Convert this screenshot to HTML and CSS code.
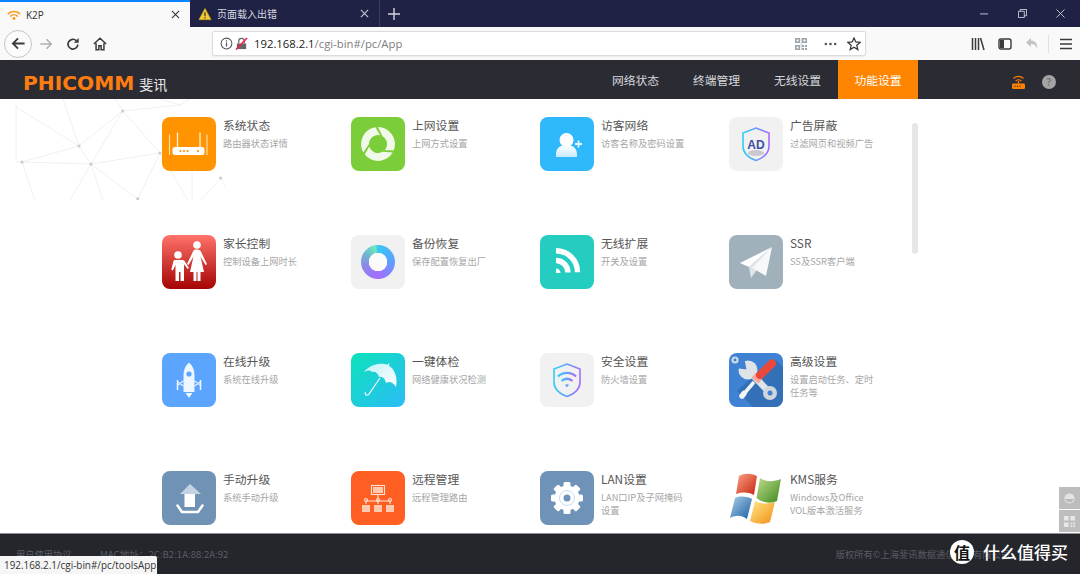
FILE: index.html
```html
<!DOCTYPE html>
<html lang="zh">
<head>
<meta charset="utf-8">
<title>K2P</title>
<link rel="stylesheet" href="styles.css">
</head>
<body>
<div class="tabbar">
  <div class="tab tab-active">
    <svg class="tab-ico" viewBox="0 0 16 16"><g fill="none" stroke="#ff9a1f" stroke-width="1.8" stroke-linecap="round"><path d="M1.5 6.5a9.5 9.5 0 0 1 13 0"/><path d="M4.2 9.2a5.6 5.6 0 0 1 7.6 0"/></g><circle cx="8" cy="12" r="1.7" fill="#ff9a1f"/></svg>
    <span class="tab-label">K2P</span>
    <svg class="tab-x" viewBox="0 0 10 10"><path d="M1 1l8 8M9 1l-8 8" stroke="#333" stroke-width="1.2"/></svg>
  </div>
  <div class="tab tab-idle">
    <svg class="tab-ico" viewBox="0 0 16 16"><path d="M8 1.5L15 14.5H1z" fill="#f5c932" stroke="#c9a21f" stroke-width=".6"/><path d="M8 6v4.5M8 11.8v1.3" stroke="#333" stroke-width="1.4"/></svg>
    <span class="tab-label">页面载入出错</span>
    <svg class="tab-x" viewBox="0 0 10 10"><path d="M1 1l8 8M9 1l-8 8" stroke="#c8c9d4" stroke-width="1.2"/></svg>
  </div>
  <svg class="tab-plus" viewBox="0 0 12 12"><path d="M6 0v12M0 6h12" stroke="#d5d6e0" stroke-width="1.4"/></svg>
  <div class="winctl">
    <svg viewBox="0 0 10 10"><path d="M0 5.5h9" stroke="#d0d1db" stroke-width="1"/></svg>
    <svg viewBox="0 0 10 10"><path d="M.5 2.5h6.5v7H.5zM2.5 2.5V.5h7v7H7" fill="none" stroke="#d0d1db" stroke-width="1"/></svg>
    <svg viewBox="0 0 10 10"><path d="M.5.5l9 9M9.500.5l-9 9" stroke="#d0d1db" stroke-width="1"/></svg>
  </div>
</div>

<div class="toolbar">
  <div class="back"><svg viewBox="0 0 16 16"><path d="M14.500 8H2M7.500 2.500L2 8l5.500 5.500" fill="none" stroke="#3a3a3c" stroke-width="1.9"/></svg></div>
  <svg class="tb tb-fwd" viewBox="0 0 16 16"><path d="M1.500 8H14M8.500 2.500L14 8l-5.500 5.500" fill="none" stroke="#b1b1b3" stroke-width="1.800"/></svg>
  <svg class="tb tb-reload" viewBox="0 0 16 16"><path d="M13.500 8.500a5.600 5.600 0 1 1-1.700-4.300" fill="none" stroke="#3a3a3c" stroke-width="1.900"/><path d="M14.500 1v5.500H9z" fill="#3a3a3c"/></svg>
  <svg class="tb tb-home" viewBox="0 0 16 16"><path d="M1 8l7-6.500L15 8M3.500 7v7.500h3.200v-4.500h2.600v4.500h3.200V7" fill="none" stroke="#3a3a3c" stroke-width="1.700"/></svg>
  <div class="urlbar">
    <svg class="u-info" viewBox="0 0 14 14"><circle cx="7" cy="7" r="5.800" fill="none" stroke="#555" stroke-width="1.100"/><path d="M7 6v4.200M7 3.600v1.300" stroke="#555" stroke-width="1.300"/></svg>
    <svg class="u-lock" viewBox="0 0 14 14"><path d="M2 13V7h10v6z" fill="#666"/><path d="M4 7V4.500a3 3 0 0 1 6 0V7" fill="none" stroke="#666" stroke-width="1.300"/><path d="M1 13.500L13 1" stroke="#f0224b" stroke-width="1.700"/></svg>
    <span class="url"><b>192.168.2.1</b>/cgi-bin#/pc/App</span>
    <svg class="u-qr" viewBox="0 0 12 12"><path d="M0 0h5v5H0zM7 0h5v5H7zM0 7h5v5H0z" fill="#9ba3ad"/><path d="M1.500 1.500h2v2h-2zM8.500 1.500h2v2h-2zM1.500 8.500h2v2h-2z" fill="#fff"/><path d="M7 7h2v2H7zM10 7h2v2h-2zM7 10h2v2H7zM10 10h2v2h-2zM5.800 0h.6v12h-.6z" fill="#9ba3ad"/></svg>
    <svg class="u-dots" viewBox="0 0 14 4"><circle cx="2" cy="2" r="1.400" fill="#555"/><circle cx="7" cy="2" r="1.400" fill="#555"/><circle cx="12" cy="2" r="1.400" fill="#555"/></svg>
    <svg class="u-star" viewBox="0 0 14 14"><path d="M7 1l1.800 4 4.300.4-3.300 2.900 1 4.300L7 10.300 3.200 12.600l1-4.300L.9 5.400 5.200 5z" fill="none" stroke="#3a3a3c" stroke-width="1.300"/></svg>
  </div>
  <div class="tb-right">
    <svg class="r-lib" viewBox="0 0 14 14"><path d="M1.500 1v12M4.500 1v12M7.500 1v12M9.500 1l3.500 12" stroke="#3a3a3c" stroke-width="1.500" fill="none"/></svg>
    <svg class="r-side" viewBox="0 0 14 14"><rect x="1" y="2" width="12" height="10" rx="2" fill="none" stroke="#3a3a3c" stroke-width="1.400"/><rect x="2" y="3" width="4" height="8" fill="#3a3a3c"/></svg>
    <svg class="r-undo" viewBox="0 0 14 14"><path d="M6 1L1 5.500 6 10V7c3 0 5 1 6 5 .8-5-1.500-8-6-8.500z" fill="#c2c2c5"/></svg>
    <i class="r-sep"></i>
    <svg class="r-menu" viewBox="0 0 14 14"><path d="M1 2.500h12M1 7h12M1 11.500h12" stroke="#3a3a3c" stroke-width="1.600"/></svg>
  </div>
</div>

<header class="topnav">
  <div class="logo"><span class="logo-en">PHICOMM</span><span class="logo-cn">斐讯</span></div>
  <nav class="menu">
    <a class="menu-item">网络状态</a>
    <a class="menu-item">终端管理</a>
    <a class="menu-item">无线设置</a>
    <a class="menu-item menu-on">功能设置</a>
  </nav>
  <svg class="nav-router" viewBox="0 0 15 16"><path d="M2.500 4.500a7 7 0 0 1 10 0M4.700 7a4 4 0 0 1 5.600 0" fill="none" stroke="#ff7f00" stroke-width="1.200"/><path d="M7.500 7v3" stroke="#ff7f00" stroke-width="1.200"/><rect x="1" y="9.500" width="13" height="5.500" rx="1.300" fill="#ff7f00"/><path d="M3.500 12.300h1M6 12.300h1M8.500 12.300h1" stroke="#2b2c33" stroke-width="1.200"/></svg>
  <div class="nav-help">?</div>
</header>

<main class="content">
  <svg class="mesh" viewBox="0 99 240 101">
    <g stroke="#ececec" stroke-width=".8" fill="none">
      <path d="M16 107L79 146M63 99L79 146M79 146L22 162M79 146L122.700 111M79 146L91 164M22 162L91 164M22 162L35 200M16 162h6M16 104V160M91 164L160 153M91 164L122.700 111M91 164L70 200M91 164L103 200M91 164L137.700 199M160 153L137.700 199M122.700 111L160 153M122.700 111L180 105M122.700 111L115 99M180 105L160 99M160 153L188 200M192 130L192 200M220.700 178L201 200M220.700 178L225 186M180 105L190 99"/>
    </g>
    <g fill="#c9c9c9"><circle cx="122.700" cy="111" r="1.500"/><circle cx="79" cy="146" r="1.500"/><circle cx="22" cy="162" r="1.500"/><circle cx="91" cy="164" r="1.500"/><circle cx="160" cy="153" r="1.500"/><circle cx="137.700" cy="198.700" r="1.500"/><circle cx="220.700" cy="178" r="1.500"/></g>
  </svg>

  <div class="apps">
    <div class="app">
      <div class="ico c-orange"><svg viewBox="0 0 54 54"><g stroke="#ffe2b8" stroke-width="1.100"><path d="M7.500 17.500V38M45 17.500V38"/></g><g stroke="#fff1dc" stroke-width="1.300"><path d="M15.500 15.500V31M38 15.500V31"/></g><rect x="10.500" y="30" width="32" height="8" rx="2.500" fill="#fff"/><g fill="#ff9400"><circle cx="18.500" cy="34" r="1.100"/><circle cx="22" cy="34" r="1.100"/><circle cx="25.500" cy="34" r="1.100"/><circle cx="36" cy="34" r="1.100"/></g></svg></div>
      <div class="txt"><div class="t">系统状态</div><div class="s">路由器状态详情</div></div>
    </div>
    <div class="app">
      <div class="ico c-green"><svg viewBox="0 0 54 54"><g fill="#f1fae9"><path d="M12.300 35.500A17 17 0 0 1 24.500 10.200L29.100 18.200A9 9 0 0 0 18 27z"/><path d="M12.300 35.500A17 17 0 0 1 24.500 10.200L29.100 18.200A9 9 0 0 0 18 27z" transform="rotate(120 27 27)"/><path d="M12.300 35.500A17 17 0 0 1 24.500 10.200L29.100 18.200A9 9 0 0 0 18 27z" transform="rotate(240 27 27)"/></g></svg></div>
      <div class="txt"><div class="t">上网设置</div><div class="s">上网方式设置</div></div>
    </div>
    <div class="app">
      <div class="ico c-sky"><svg viewBox="0 0 54 54"><defs><linearGradient id="gp" x1="0" y1="0" x2="0" y2="1"><stop offset="0" stop-color="#fff"/><stop offset="1" stop-color="#c8e9fc"/></linearGradient></defs><circle cx="26.500" cy="23" r="7" fill="#fff"/><path d="M16 40v-3c0-5 3.500-8 7-8.500 2 1.500 5 1.500 7 0 3.500.5 7 3.500 7 8.500v3z" fill="url(#gp)"/><path d="M38.500 23.500v7M35 27h7" stroke="#e8f7ff" stroke-width="1.800"/></svg></div>
      <div class="txt"><div class="t">访客网络</div><div class="s">访客名称及密码设置</div></div>
    </div>
    <div class="app">
      <div class="ico c-pale"><svg viewBox="0 0 54 54"><defs><linearGradient id="gs" x1="0" y1="0" x2="1" y2="0"><stop offset="0" stop-color="#2bd0f5"/><stop offset="1" stop-color="#a76cff"/></linearGradient></defs><path d="M27 11l13 5v13c0 7-6 12-13 14.500C20 41 14 36 14 29V16z" fill="none" stroke="url(#gs)" stroke-width="1.600"/><ellipse cx="27" cy="36" rx="8" ry="3" fill="#c9c9cf"/><text class="ad" x="27" y="31.500" text-anchor="middle">AD</text></svg></div>
      <div class="txt"><div class="t">广告屏蔽</div><div class="s">过滤网页和视频广告</div></div>
    </div>

    <div class="app">
      <div class="ico c-red"><svg viewBox="0 0 54 54"><g fill="#fff"><circle cx="35" cy="10" r="3.800"/><path d="M35 14.500c2.200 0 3.300.8 4 2.300l6 12.500-1.500.8-5-8.500 3.500 15.500h-3.500V46h-3v-9h-1v9h-3v-9.100h-3.500l3.500-15.500-5 8.500-1.500-.8 6-12.500c.7-1.500 1.800-2.300 4-2.300z"/><circle cx="16" cy="20" r="3.800"/><path d="M11.500 25h9c1.500 0 2.200.8 2.700 2L27 33l-1.400 1-3.600-4.800V46h-3.500v-9h-1.500v9H13.500V30l-2.700 5.500-1.500-.8 2-8c.2-1 .5-1.700 1.700-1.700z"/></g></svg></div>
      <div class="txt"><div class="t">家长控制</div><div class="s">控制设备上网时长</div></div>
    </div>
    <div class="app">
      <div class="ico c-pale ringbox"><div class="ring"></div></div>
      <div class="txt"><div class="t">备份恢复</div><div class="s">保存配置恢复出厂</div></div>
    </div>
    <div class="app">
      <div class="ico c-teal"><svg viewBox="0 0 54 54"><g fill="none" stroke="#fff" stroke-width="5.400"><path d="M16 15.700a21.500 21.500 0 0 1 21.500 21.500"/><path d="M16 25.500a11.900 11.900 0 0 1 11.900 11.900"/></g><path d="M16 33.500a4.500 4.500 0 0 1 4.500 4.500H16z" fill="#fff"/></svg></div>
      <div class="txt"><div class="t">无线扩展</div><div class="s">开关及设置</div></div>
    </div>
    <div class="app">
      <div class="ico c-slate"><svg viewBox="0 0 54 54"><path d="M43 12L11 28l9 4z" fill="#fff"/><path d="M43 12L20 32l2 11 5-7z" fill="#dfe5e8"/><path d="M43 12L23 33l14 8z" fill="#f6f8f9"/></svg></div>
      <div class="txt"><div class="t">SSR</div><div class="s">SS及SSR客户端</div></div>
    </div>

    <div class="app">
      <div class="ico c-blue"><svg viewBox="0 0 54 54"><path d="M27 9.500c3.500 3 5.500 7 5.500 12.500v17h-11V22c0-5.500 2-9.500 5.500-12.500z" fill="#eef6ff"/><path d="M23.500 40h7L27 45z" fill="#eef6ff"/><g fill="none" stroke="#eef6ff" stroke-width="1.100"><path d="M21.500 28l-6 4M21.500 33l-6-4M32.500 28l6 4M32.500 33l6-4"/><path d="M15.500 27v10M38.500 27v10" stroke-width="1.500"/></g><circle cx="27" cy="21" r="2.600" fill="#5ba5ff"/></svg></div>
      <div class="txt"><div class="t">在线升级</div><div class="s">系统在线升级</div></div>
    </div>
    <div class="app">
      <div class="ico c-aqua"><svg viewBox="0 0 54 54"><defs><linearGradient id="gu" x1="0" y1="0" x2="1" y2="1"><stop offset="0" stop-color="#bff2fb"/><stop offset="1" stop-color="#fff"/></linearGradient></defs><path d="M13 19C19 11 30 9 37 12c7 4 10 13 8 22-3-5-7-6-10-4-1-5-4-7-7-6-1-4-4-6-7-5-2-2-5-2-8 0z" fill="url(#gu)"/><path d="M38 10.500l-1.500 2.500M29 25L18 41c-1 1.500-3 1.500-3.500.2-.4-.8-.3-1.500 0-2.200" fill="none" stroke="#e9fbff" stroke-width="1.300"/></svg></div>
      <div class="txt"><div class="t">一键体检</div><div class="s">网络健康状况检测</div></div>
    </div>
    <div class="app">
      <div class="ico c-pale"><svg viewBox="0 0 54 54"><defs><linearGradient id="gw" x1="0" y1="0" x2="1" y2="0"><stop offset="0" stop-color="#2bd0f5"/><stop offset="1" stop-color="#a76cff"/></linearGradient></defs><path d="M27 11l13 5v13c0 7-6 12-13 14.500C20 41 14 36 14 29V16z" fill="none" stroke="url(#gw)" stroke-width="1.600"/><g fill="none" stroke="url(#gw)" stroke-width="2.400"><path d="M18 23.500a13 13 0 0 1 18 0"/><path d="M21.500 28a8 8 0 0 1 11 0"/></g><path d="M25 32a3 3 0 0 1 4 0l-2 2.500z" fill="#6ba8fb"/></svg></div>
      <div class="txt"><div class="t">安全设置</div><div class="s">防火墙设置</div></div>
    </div>
    <div class="app">
      <div class="ico c-tools"><svg viewBox="0 0 54 54"><path d="M47 7L54 14V54H24L8 38 30 18z" fill="#3470b8"/><circle cx="6" cy="7" r="3.600" fill="#cdd9e4"/><circle cx="6" cy="7" r="1.400" fill="#3f82d4"/><path d="M20 18L41 40" stroke="#dfe4e8" stroke-width="6.500"/><circle cx="19" cy="17" r="9.500" fill="#dfe4e8"/><path d="M6 15L17.500 16.500 15 4z" fill="#3f82d4"/><circle cx="41" cy="40" r="7" fill="#cfd6dc"/><circle cx="41" cy="40" r="2.500" fill="#3f82d4"/><path d="M25 29L14 42" stroke="#f2f4f6" stroke-width="3.500"/><path d="M15 40.500L13 43" stroke="#f2f4f6" stroke-width="5.500" stroke-linecap="round"/><path d="M30 23L26 27.500" stroke="#f7a59b" stroke-width="9"/><path d="M43 10.500L31 22" stroke="#e9483a" stroke-width="8" stroke-linecap="round"/></svg></div>
      <div class="txt"><div class="t">高级设置</div><div class="s">设置启动任务、定时任务等</div></div>
    </div>

    <div class="app">
      <div class="ico c-steel"><svg viewBox="0 0 54 54"><path d="M28 13l11 10H18z" fill="#c3d3e2"/><path d="M18 23h21l-6 0v13H22.500V23z" fill="#fff"/><path d="M15.500 34.500L20 41h16l4.500-6.500" fill="none" stroke="#fff" stroke-width="2.500" stroke-linecap="round"/></svg></div>
      <div class="txt"><div class="t">手动升级</div><div class="s">系统手动升级</div></div>
    </div>
    <div class="app">
      <div class="ico c-flame"><svg viewBox="0 0 54 54"><g fill="none" stroke="#ffe3d6" stroke-width="1.100"><rect x="20.500" y="14.500" width="13" height="9"/><path d="M27 24v4M15 33v-3h24v3M27 28v5"/><circle cx="15" cy="29" r="1.500"/><circle cx="27" cy="29" r="1.500"/><circle cx="39" cy="29" r="1.500"/></g><g fill="#ffc9b0"><rect x="22" y="16" width="10" height="6"/><rect x="11" y="34" width="8" height="7"/><rect x="23" y="34" width="8" height="7"/><rect x="35" y="34" width="8" height="7"/></g></svg></div>
      <div class="txt"><div class="t">远程管理</div><div class="s">远程管理路由</div></div>
    </div>
    <div class="app">
      <div class="ico c-gear"><svg viewBox="0 0 54 54"><g fill="#fff" transform="translate(27 27)"><circle r="12.500"/><rect x="-3.500" y="-16" width="7" height="32" rx="1.500"/><rect x="-3.500" y="-16" width="7" height="32" rx="1.500" transform="rotate(45)"/><rect x="-3.500" y="-16" width="7" height="32" rx="1.500" transform="rotate(90)"/><rect x="-3.500" y="-16" width="7" height="32" rx="1.500" transform="rotate(135)"/></g><circle cx="27" cy="27" r="7.500" fill="none" stroke="#c8dcf2" stroke-width="1"/><circle cx="27" cy="27" r="3.500" fill="#6f93b8"/></svg></div>
      <div class="txt"><div class="t">LAN设置</div><div class="s">LAN口IP及子网掩码设置</div></div>
    </div>
    <div class="app">
      <div class="ico ico-bare"><svg viewBox="0 0 54 54"><defs><linearGradient id="w1" x1="0" y1="0" x2="1" y2="1"><stop offset="0" stop-color="#f9a283"/><stop offset="1" stop-color="#c9230f"/></linearGradient><linearGradient id="w2" x1="0" y1="0" x2="1" y2="1"><stop offset="0" stop-color="#bfdc8d"/><stop offset="1" stop-color="#3f8a1d"/></linearGradient><linearGradient id="w3" x1="0" y1="0" x2="1" y2="1"><stop offset="0" stop-color="#a9d0e6"/><stop offset="1" stop-color="#1c5ea6"/></linearGradient><linearGradient id="w4" x1="0" y1="0" x2="1" y2="1"><stop offset="0" stop-color="#fde88a"/><stop offset="1" stop-color="#f28e12"/></linearGradient></defs><path d="M10 5C15 2 22 2 28 5L25 24C19 21 13 21 7 23z" fill="url(#w1)"/><path d="M31 7C37 11 44 11 52 8L48 30C41 33 34 32 27.500 27z" fill="url(#w2)"/><path d="M6 27C11 25 17 25 23 28L18 48C12 44 7 44 1 47z" fill="url(#w3)"/><path d="M26 30C32 33 39 33 46 31L41 51C34 54 27 53 21 50z" fill="url(#w4)"/></svg></div>
      <div class="txt"><div class="t">KMS服务</div><div class="s">Windows及Office VOL版本激活服务</div></div>
    </div>
  </div>

  <div class="thumb"></div>
  <div class="side">
    <div class="side-btn"><svg viewBox="0 0 14 14"><circle cx="7" cy="7" r="5.500" fill="#e4e4e4"/><path d="M2 7.500h10L9 11H5z" fill="#bbb"/></svg></div>
    <div class="side-btn"><svg viewBox="0 0 14 14"><path d="M1 1h5v5H1zM8 1h5v5H8zM1 8h5v5H1zM8 8h2v2H8zM11 8h2v2h-2zM8 11h2v2H8zM11 11h2v2h-2z" fill="#e8e8e8"/></svg></div>
  </div>
</main>

<footer class="foot">
  <span class="foot-a">用户使用协议</span>
  <span class="foot-b">MAC地址：2C:B2:1A:88:2A:92</span>
  <span class="foot-c">版权所有©上海斐讯数据通信技术有限公司</span>
  <div class="status">192.168.2.1/cgi-bin#/pc/toolsApp</div>
  <div class="mark"><span class="mark-dot">值</span><span class="mark-txt">什么值得买</span></div>
</footer>
</body>
</html>
```
FILE: styles.css
```css
* { box-sizing: border-box; }
html, body { margin: 0; height: 100%; }
body {
  width: 1080px; height: 574px; overflow: hidden;
  display: flex; flex-direction: column;
  font-family: "Open Sans", "Noto Sans CJK SC", sans-serif;
  background: #fff;
}
svg { display: block; }

.tabbar { height: 27px; background: #1f2244; display: flex; align-items: stretch; flex: none; }
.tab { width: 190px; display: flex; align-items: center; font-size: 10px; padding-left: 7px; position: relative; }
.tab-active { background: #f9f9fa; color: #333; border-top: 2px solid #0a84ff; }
.tab-idle { color: #d8d9e3; border-right: 1px solid #3a3d5c; padding-left: 8px; }
.tab-ico { width: 14px; height: 14px; flex: none; margin-right: 5px; }
.tab-label { flex: 1; }
.tab-x { width: 9px; height: 9px; margin-right: 10px; }
.tab-plus { width: 12px; height: 12px; align-self: center; margin-left: 8px; }
.winctl { margin-left: auto; display: flex; align-items: center; gap: 29px; padding-right: 15px; }
.winctl svg { width: 9px; height: 9px; }

.toolbar { height: 33px; background: #f9f9fa; display: flex; align-items: center; flex: none; padding-left: 4px; }
.back { width: 28px; height: 28px; border-radius: 50%; border: 1px solid #c6c6c8; background: #fbfbfb; display: flex; align-items: center; justify-content: center; }
.back svg { width: 15px; height: 15px; }
.tb { width: 14px; height: 14px; flex: none; }
.tb-fwd { margin-left: 7px; }
.tb-reload { margin-left: 13px; }
.tb-home { margin-left: 13px; }
.urlbar { width: 654px; height: 25px; margin-left: 105px; background: #fff; border: 1px solid #dcdcde; border-radius: 2px; display: flex; align-items: center; box-shadow: 0 1px 2px rgba(0,0,0,.06); }
.u-info { width: 13px; height: 13px; margin-left: 7px; }
.u-lock { width: 13px; height: 13px; margin-left: 2px; }
.url { font-size: 11.3px; color: #7d7d80; margin-left: 6px; flex: 1; white-space: nowrap; }
.url b { font-weight: 400; color: #1a1a1a; }
.u-qr { width: 12px; height: 12px; }
.u-dots { width: 13px; height: 4px; margin-left: 17px; }
.u-star { width: 14px; height: 14px; margin-left: 10px; margin-right: 4px; }
.tb-right { display: flex; align-items: center; margin-left: 105px; }
.tb-right svg { width: 14px; height: 14px; flex: none; }
.r-side, .r-undo { margin-left: 13px; }
.r-sep { width: 1px; height: 18px; background: #e1e1e3; margin-left: 9px; }
.r-menu { margin-left: 10px; }

.topnav { height: 39px; background: #2b2c33; display: flex; align-items: stretch; flex: none; position: relative; }
.logo { display: flex; align-items: center; padding-left: 23px; width: 595px; }
.logo-en { font-family: "DejaVu Sans", sans-serif; font-weight: 700; font-size: 20.2px; color: #ff7c10; margin-top: 6px; }
.logo-cn { font-family: "Noto Sans CJK SC", sans-serif; font-size: 14px; color: #e8e8e8; margin-left: 5px; margin-top: 8px; }
.menu { display: flex; }
.menu-item { width: 81px; display: flex; align-items: center; justify-content: center; font-size: 11.8px; color: #d6d8dc; font-family: "Noto Sans CJK SC", sans-serif; }
.menu-on { background: #ff8400; color: #fff; width: 80px; }
.nav-router { width: 15px; height: 16px; align-self: center; margin-left: 93px; margin-top: 5px; }
.nav-help { width: 14px; height: 14px; border-radius: 50%; background: #a5a5a5; color: #7a7a7a; font-size: 10px; font-weight: 700; text-align: center; line-height: 14px; align-self: center; margin-left: 16px; margin-top: 4px; }

.content { height: 434px; flex: none; position: relative; overflow: hidden; background: #fff; }
.mesh { position: absolute; left: 0; top: 0; width: 240px; height: 101px; }
.apps { position: relative; display: grid; grid-template-columns: repeat(4, 189px); grid-auto-rows: 118px; padding: 18px 0 0 162px; }
.app { display: flex; gap: 7px; font-family: "Noto Sans CJK SC", sans-serif; }
.ico { width: 54px; height: 54px; border-radius: 8px; flex: none; overflow: hidden; }
.ico svg { width: 54px; height: 54px; }
.ico-bare { border-radius: 0; overflow: visible; }
.txt { width: 90px; }
.t { font-size: 11.8px; line-height: 16px; color: #555; white-space: nowrap; }
.s { font-size: 9.25px; line-height: 13px; color: #a6a6a6; margin-top: 4px; }
.ad { font: 700 12px "Liberation Sans", sans-serif; fill: #3f4ea6; }
.c-orange { background: #ff9400; }
.c-green { background: #7ccd3a; }
.c-sky { background: #2fb8fb; }
.c-pale { background: #f1f1f1; }
.c-red { background: linear-gradient(#ff736a, #a50404); }
.c-teal { background: #25ccc0; }
.c-slate { background: #a0b1bb; }
.c-blue { background: #5ba5ff; }
.c-aqua { background: linear-gradient(135deg, #0ce2ba, #2cbcf6); }
.c-tools { background: #3f82d4; }
.c-steel { background: #7093b5; }
.c-flame { background: #ff5f22; }
.c-gear { background: #6f93b8; }
.ringbox { display: flex; align-items: center; justify-content: center; }
.ring { width: 34px; height: 34px; border-radius: 50%; background: radial-gradient(circle, #fbfbfb 0 9px, transparent 9.5px), conic-gradient(#35c9f7, #5f9dfb 25%, #a56dff 50%, #8b88e8 70%, #6fb8d0 85%, #6fe8c0 97%, #35c9f7); }
.thumb { position: absolute; left: 912px; top: 24px; width: 6px; height: 131px; background: #e6e6e6; border-radius: 3px; }
.side { position: absolute; right: 0; bottom: 1px; display: flex; flex-direction: column; gap: 1px; }
.side-btn { width: 21px; height: 22px; background: #bdbdbd; display: flex; align-items: center; justify-content: center; }
.side-btn svg { width: 13px; height: 13px; }

.foot { flex: 1; background: #25262c; border-top: 1px solid #8f8f8f; position: relative; display: flex; align-items: center; font-size: 9.25px; color: #5a5c66; font-family: "Noto Sans CJK SC", sans-serif; padding: 0 0 0 16px; }
.foot-a { width: 84px; }
.foot-b { font-size: 9.6px; }
.foot-c { margin-left: auto; padding-right: 70px; }
.status { position: absolute; left: 0; bottom: 0; width: 157px; height: 18px; background: #f6f6f6; color: #333; font: 9.9px/18px "Open Sans", sans-serif; padding-left: 4px; white-space: nowrap; border-top-right-radius: 2px; }
.mark { position: absolute; left: 950px; top: 5px; display: flex; align-items: center; gap: 9px; }
.mark-dot { width: 24px; height: 24px; border-radius: 50%; background: #fff; color: #111; font-size: 16px; font-weight: 700; line-height: 24px; text-align: center; }
.mark-txt { color: #fff; font-size: 17px; font-weight: 500; white-space: nowrap; }
```
